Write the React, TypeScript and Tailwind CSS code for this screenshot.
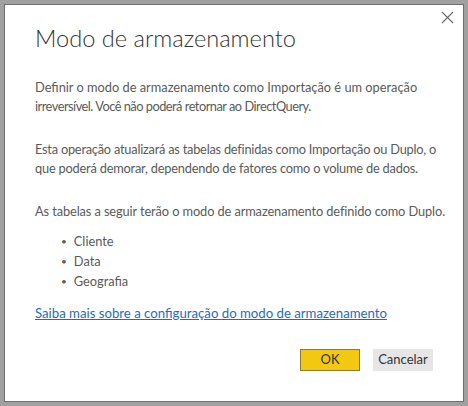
import React from "react";

export default function App() {
  const body = { fontFamily: 'Lato, "Open Sans", sans-serif' };
  return (
    <div className="w-[468px] h-[406px] bg-[#a0a0a0] p-[4px]">
      <div className="relative w-[460px] h-[398px] bg-white border border-[#6f6f6f] flex flex-col pl-[30px] pr-[10px]" style={body}>
        <button className="absolute top-[6px] right-[9px] w-[13px] h-[13px] flex items-center justify-center">
          <svg width="13" height="13" viewBox="0 0 13 13">
            <path d="M1 1 L12 12 M12 1 L1 12" stroke="#6a6a6a" strokeWidth="1.1" />
          </svg>
        </button>
        <h1 className="mt-[17px] text-[23.6px] leading-[32px] font-light text-[#333333] whitespace-nowrap">Modo de armazenamento</h1>
        <div className="mt-[24px] text-[12.8px] leading-[19px] text-[#5a5a5a] whitespace-nowrap">
          <p>
            <span className="block">Definir o modo de armazenamento como Importação é um operação</span>
            <span className="block tracking-[-0.5px]">irreversível. Você não poderá retornar ao DirectQuery.</span>
          </p>
          <p className="mt-[24px]">
            <span className="block tracking-[-0.23px]">Esta operação atualizará as tabelas definidas como Importação ou Duplo, o</span>
            <span className="block tracking-[-0.2px]">que poderá demorar, dependendo de fatores como o volume de dados.</span>
          </p>
          <p className="mt-[24px] tracking-[-0.1px]">As tabelas a seguir terão o modo de armazenamento definido como Duplo.</p>
          <ul className="mt-[10px] pl-[26px] leading-[20px]">
            <li className="flex items-center gap-[7px]"><span className="text-[10px]">•</span>Cliente</li>
            <li className="flex items-center gap-[7px]"><span className="text-[10px]">•</span>Data</li>
            <li className="flex items-center gap-[7px]"><span className="text-[10px]">•</span>Geografia</li>
          </ul>
          <a className="inline-block mt-[13px] text-[13.2px] text-[#1f6bc4] underline" href="#">Saiba mais sobre a configuração do modo de armazenamento</a>
        </div>
        <div className="mt-auto mb-[30px] mr-[20px] flex justify-end gap-[13px] text-[13px]">
          <button className="w-[60px] h-[22px] bg-[#f2c811] border border-[#8a7b3a] text-[#333]">OK</button>
          <button className="w-[60px] h-[22px] bg-[#e6e6e6] text-[#333]">Cancelar</button>
        </div>
      </div>
    </div>
  );
}
